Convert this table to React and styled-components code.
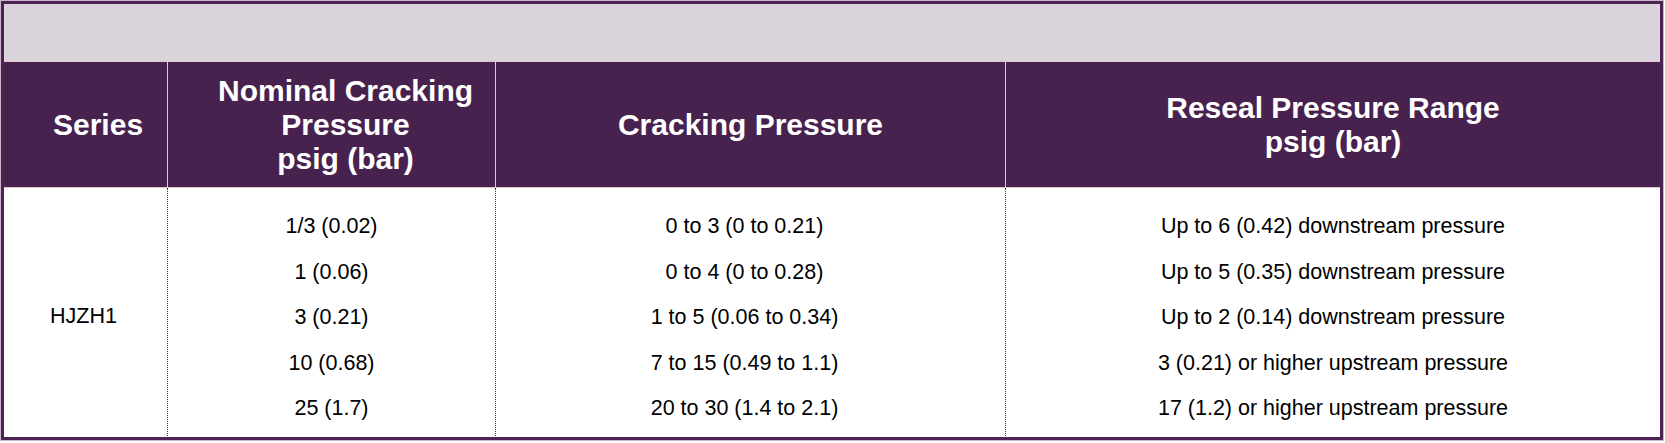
import React from "react";
import styled, { createGlobalStyle } from "styled-components";

const rows = [
  ["1/3 (0.02)", "0 to 3 (0 to 0.21)", "Up to 6 (0.42) downstream pressure"],
  ["1 (0.06)", "0 to 4 (0 to 0.28)", "Up to 5 (0.35) downstream pressure"],
  ["3 (0.21)", "1 to 5 (0.06 to 0.34)", "Up to 2 (0.14) downstream pressure"],
  ["10 (0.68)", "7 to 15 (0.49 to 1.1)", "3 (0.21) or higher upstream pressure"],
  ["25 (1.7)", "20 to 30 (1.4 to 2.1)", "17 (1.2) or higher upstream pressure"],
];

function App() {
  return (
    <>
      <GlobalStyle />
      <Table>
        <Band />
        <HeadRow>
          <HeadCell $align="left" $pad="0 0 0 49px">
            Series
          </HeadCell>
          <HeadCell $divider $pad="0 0 0 28px">
            Nominal Cracking
            <br />
            Pressure
            <br />
            psig (bar)
          </HeadCell>
          <HeadCell $divider>Cracking Pressure</HeadCell>
          <HeadCell $divider>
            Reseal Pressure Range
            <br />
            psig (bar)
          </HeadCell>
        </HeadRow>
        <BodyRow>
          <SeriesCell>HJZH1</SeriesCell>
          <BodyCell>
            {rows.map((r) => (
              <Line key={r[0]}>{r[0]}</Line>
            ))}
          </BodyCell>
          <BodyCell $shift="0 12px 0 0">
            {rows.map((r) => (
              <Line key={r[1]}>{r[1]}</Line>
            ))}
          </BodyCell>
          <BodyCell>
            {rows.map((r) => (
              <Line key={r[2]}>{r[2]}</Line>
            ))}
          </BodyCell>
        </BodyRow>
      </Table>
    </>
  );
}

export default App;

const GlobalStyle = createGlobalStyle`
  body {
    margin: 0;
    background: #ffffff;
    font-family: "Liberation Sans", Arial, sans-serif;
  }
`;

const Table = styled.div`
  box-sizing: border-box;
  margin: 1px;
  width: 1662px;
  border: 3px solid #4a2351;
  outline: 1px solid #c9b6cd;
`;

const Band = styled.div`
  height: 57px;
  background: #dad3dc;
  border-bottom: 1px solid #e6c3cc;
`;

const HeadRow = styled.div`
  display: grid;
  grid-template-columns: 163px 328px 510px 1fr;
  height: 125px;
  background: #48224f;
  border-bottom: 1px solid #e6c3cc;
`;

const HeadCell = styled.div`
  box-sizing: border-box;
  display: flex;
  align-items: center;
  justify-content: ${(p) => (p.$align === "left" ? "flex-start" : "center")};
  text-align: ${(p) => p.$align || "center"};
  padding: ${(p) => p.$pad || "0"};
  border-left: ${(p) => (p.$divider ? "1px solid #e6c3cc" : "none")};
  color: #ffffff;
  font-weight: 700;
  font-size: 30px;
  line-height: 34px;
`;

const BodyRow = styled.div`
  display: grid;
  grid-template-columns: 163px 328px 510px 1fr;
  height: 249px;
  background: #ffffff;
  color: #000000;
  font-size: 21.5px;
`;

const SeriesCell = styled.div`
  display: flex;
  align-items: center;
  padding-left: 46px;
  padding-top: 8px;
`;

const BodyCell = styled.div`
  box-sizing: border-box;
  display: flex;
  flex-direction: column;
  padding: 16px 0 6px;
  margin: ${(p) => p.$shift || "0"};
  border-left: 1px dotted #4a2351;
  text-align: center;
`;

const Line = styled.div`
  height: 45.5px;
  line-height: 45.5px;
  white-space: nowrap;
`;
